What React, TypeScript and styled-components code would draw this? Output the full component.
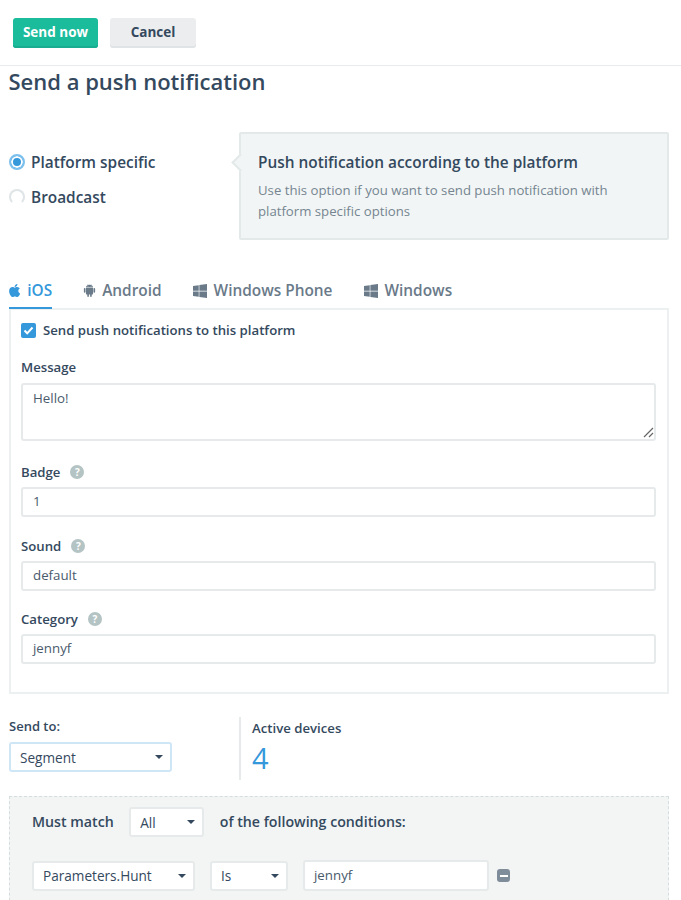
import React from "react";
import styled, { createGlobalStyle } from "styled-components";
import { FaApple, FaWindows } from "react-icons/fa";
import { AiFillAndroid } from "react-icons/ai";

const Global = createGlobalStyle`
  html, body { margin: 0; padding: 0; background: #fff; }
  body { font-family: "Open Sans", "Liberation Sans", sans-serif; color: #34495e; overflow: hidden; }
  * { box-sizing: border-box; }
`;

const Page = styled.div`
  width: 681px;
  height: 900px;
  overflow: hidden;
`;

const Toolbar = styled.div`
  height: 66px;
  border-bottom: 1px solid #e9eced;
  padding: 18px 0 0 13px;
  display: flex;
  gap: 12px;
  align-items: flex-start;
`;

const Button = styled.button<{ $primary?: boolean }>`
  width: ${(p) => (p.$primary ? 85 : 86)}px;
  height: 30px;
  padding: 0 0 3px;
  border: 0;
  border-radius: 3px;
  font: 700 13.5px "Open Sans", sans-serif;
  background: ${(p) => (p.$primary ? "#1abc9c" : "#ebedef")};
  color: ${(p) => (p.$primary ? "#fff" : "#34495e")};
  box-shadow: inset 0 -2px 0 ${(p) => (p.$primary ? "#18ad90" : "#e1e4e6")};
`;

const Content = styled.div`
  padding: 0 12px 0 9px;
`;

const Title = styled.h1`
  margin: 0 0 0 -0.5px;
  height: 30px;
  font-size: 22px;
  line-height: 30px;
  font-weight: 600;
  color: #34495e;
`;

const ChoiceRow = styled.div`
  display: flex;
  margin-top: 36px;
  margin-bottom: 34px;
`;

const Radios = styled.div`
  width: 230px;
  padding-top: 19px;
  display: flex;
  flex-direction: column;
  gap: 13px;
`;

const RadioRow = styled.div`
  display: flex;
  align-items: center;
  gap: 6px;
  height: 22px;
  font-size: 15.4px;
  font-weight: 600;
`;

const RadioDot = styled.span<{ $on?: boolean }>`
  width: 16px;
  height: 16px;
  border-radius: 50%;
  flex: none;
  background: ${(p) => (p.$on ? "#3498db" : "#fff")};
  border: ${(p) => (p.$on ? "2px solid #7cc0ee" : "2px solid #dfe4e6")};
  box-shadow: ${(p) => (p.$on ? "inset 0 0 0 2px #fff" : "none")};
  ${(p) => (p.$on ? "" : "border-bottom-color: transparent;")}
`;

const Callout = styled.div`
  position: relative;
  width: 430px;
  height: 108px;
  background: #f2f5f5;
  border: 2px solid #e3e9e9;
  border-radius: 2px;
  padding: 18px 17px 0;
  &::before {
    content: "";
    position: absolute;
    left: -7px;
    top: 22px;
    width: 11px;
    height: 11px;
    background: #f2f5f5;
    border-left: 2px solid #e3e9e9;
    border-bottom: 2px solid #e3e9e9;
    transform: rotate(45deg);
  }
`;

const CalloutTitle = styled.div`
  font-size: 15.4px;
  line-height: 22px;
  font-weight: 600;
`;

const CalloutText = styled.div`
  margin-top: 6px;
  font-size: 13.2px;
  line-height: 21px;
  color: #758591;
`;

const Tabs = styled.div`
  display: flex;
  gap: 31px;
  height: 35px;
`;

const Tab = styled.div<{ $active?: boolean }>`
  height: 35px;
  display: flex;
  align-items: center;
  gap: 7px;
  font-size: 15.4px;
  font-weight: 600;
  color: ${(p) => (p.$active ? "#3498db" : "#6a7a89")};
  border-bottom: 2px solid ${(p) => (p.$active ? "#3498db" : "transparent")};
  & svg { flex: none; }
`;

const AppleIcon = styled(FaApple)`
  width: 11.25px;
  height: 15px;
`;

const WindowsIcon = styled(FaWindows)`
  width: 14px;
  height: 16px;
`;

const AndroidIcon = styled(AiFillAndroid)`
  width: 15px;
  height: 15px;
  margin: 0 -1.5px;
`;

const Panel = styled.div`
  border: 2px solid #ecf0f0;
  height: 386px;
  margin-top: -1px;
  padding: 10px 11px 0 10px;
`;

const CheckRow = styled.div`
  display: flex;
  align-items: center;
  gap: 7px;
  height: 20px;
  font-size: 13.2px;
  font-weight: 600;
`;

const CheckBox = styled.span`
  width: 15px;
  height: 15px;
  border-radius: 2px;
  background: #3498db;
  display: flex;
  align-items: center;
  justify-content: center;
  & svg { display: block; }
`;

const FieldLabel = styled.div`
  display: flex;
  align-items: center;
  gap: 10px;
  height: 20px;
  font-size: 13.2px;
  font-weight: 600;
`;

const Help = styled.span`
  width: 14px;
  height: 14px;
  border-radius: 50%;
  background: #b4c3c3;
  color: #fff;
  font-size: 10px;
  font-weight: 700;
  line-height: 14px;
  text-align: center;
`;

const Field = styled.div<{ $top: number }>`
  margin-top: ${(p) => p.$top}px;
`;

const Input = styled.div<{ $tall?: boolean }>`
  position: relative;
  margin-top: ${(p) => (p.$tall ? 6 : 5)}px;
  height: ${(p) => (p.$tall ? 58 : 30)}px;
  border: 2px solid #e6eaea;
  border-radius: 3px;
  background: #fff;
  padding: ${(p) => (p.$tall ? "3px" : "0")} 10px 0;
  font-size: 13.3px;
  line-height: ${(p) => (p.$tall ? "20px" : "24px")};
  color: #4a5b6c;
`;

const Grip = styled.svg`
  position: absolute;
  right: 0;
  bottom: 1px;
`;

const SendRow = styled.div`
  display: flex;
  margin-top: 23px;
`;

const SendCol = styled.div`
  width: 230px;
`;

const SendLabel = styled.div`
  font-size: 13px;
  font-weight: 600;
  line-height: 18px;
  margin-bottom: 7px;
`;

const Select = styled.div<{ $w: number; $focus?: boolean }>`
  width: ${(p) => p.$w}px;
  height: 30px;
  border: 2px solid ${(p) => (p.$focus ? "#cfe6f6" : "#e6eaea")};
  border-radius: 3px;
  background: #fff;
  display: flex;
  align-items: center;
  justify-content: space-between;
  padding: 0 7px 0 9px;
  font-size: 13.6px;
  font-weight: 500;
  color: #34495e;
  flex: none;
  &::after {
    content: "";
    border-top: 4px solid #34495e;
    border-left: 4px solid transparent;
    border-right: 4px solid transparent;
  }
`;

const Active = styled.div`
  border-left: 2px solid #e6eaea;
  height: 63px;
  padding: 2px 0 0 11px;
`;

const ActiveLabel = styled.div`
  font-size: 13.2px;
  font-weight: 600;
  line-height: 18px;
`;

const ActiveCount = styled.div`
  font-size: 29px;
  line-height: 36px;
  margin-top: 3px;
  color: #3498db;
`;

const Conditions = styled.div`
  margin-top: 16px;
  height: 120px;
  border: 1px dashed #d5dede;
  background: #f3f5f5;
  padding: 10px 0 0 22px;
`;

const MatchRow = styled.div`
  display: flex;
  align-items: center;
  gap: 15.5px;
  font-size: 14.2px;
  font-weight: 600;
`;

const MatchText = styled.span`
  margin-bottom: 2px;
`;

const RuleRow = styled.div`
  display: flex;
  align-items: center;
  gap: 15px;
  margin-top: 23px;
`;

const RuleInput = styled.div`
  width: 186px;
  height: 31px;
  border: 2px solid #e6eaea;
  border-radius: 3px;
  background: #fff;
  padding: 0 9px;
  font-size: 13.3px;
  line-height: 27px;
  color: #4a5b6c;
`;

const Minus = styled.span`
  width: 13px;
  height: 13px;
  border-radius: 3px;
  background: #7f8c99;
  display: flex;
  align-items: center;
  justify-content: center;
  margin-left: -7px;
  &::before {
    content: "";
    width: 8px;
    height: 2px;
    background: #fff;
  }
`;

export default function App() {
  return (
    <Page>
      <Global />
      <Toolbar>
        <Button $primary>Send now</Button>
        <Button>Cancel</Button>
      </Toolbar>
      <Content>
        <Title>Send a push notification</Title>
        <ChoiceRow>
          <Radios>
            <RadioRow><RadioDot $on />Platform specific</RadioRow>
            <RadioRow><RadioDot />Broadcast</RadioRow>
          </Radios>
          <Callout>
            <CalloutTitle>Push notification according to the platform</CalloutTitle>
            <CalloutText>
              Use this option if you want to send push notification with
              <br />
              platform specific options
            </CalloutText>
          </Callout>
        </ChoiceRow>
        <Tabs>
          <Tab $active><AppleIcon />iOS</Tab>
          <Tab><AndroidIcon />Android</Tab>
          <Tab><WindowsIcon />Windows Phone</Tab>
          <Tab><WindowsIcon />Windows</Tab>
        </Tabs>
        <Panel>
          <CheckRow>
            <CheckBox>
              <svg width="11" height="11" viewBox="0 0 11 11" fill="none">
                <path d="M1.5 5.5 4.2 8.3 9.5 2.5" stroke="#fff" strokeWidth="2" />
              </svg>
            </CheckBox>
            Send push notifications to this platform
          </CheckRow>
          <Field $top={17}>
            <FieldLabel>Message</FieldLabel>
            <Input $tall>
              Hello!
              <Grip width="12" height="12" viewBox="0 0 12 12" fill="none">
                <path d="M2 11 11 2M7 11l4-4" stroke="#666" strokeWidth="1.2" />
              </Grip>
            </Input>
          </Field>
          <Field $top={21}>
            <FieldLabel>Badge<Help>?</Help></FieldLabel>
            <Input>1</Input>
          </Field>
          <Field $top={18.5}>
            <FieldLabel>Sound<Help>?</Help></FieldLabel>
            <Input>default</Input>
          </Field>
          <Field $top={18.5}>
            <FieldLabel>Category<Help>?</Help></FieldLabel>
            <Input>jennyf</Input>
          </Field>
        </Panel>
        <SendRow>
          <SendCol>
            <SendLabel>Send to:</SendLabel>
            <Select $w={163} $focus>Segment</Select>
          </SendCol>
          <Active>
            <ActiveLabel>Active devices</ActiveLabel>
            <ActiveCount>4</ActiveCount>
          </Active>
        </SendRow>
        <Conditions>
          <MatchRow>
            <MatchText>Must match</MatchText>
            <Select $w={75}>All</Select>
            <MatchText>of the following conditions:</MatchText>
          </MatchRow>
          <RuleRow>
            <Select $w={163}>Parameters.Hunt</Select>
            <Select $w={78}>Is</Select>
            <RuleInput>jennyf</RuleInput>
            <Minus />
          </RuleRow>
        </Conditions>
      </Content>
    </Page>
  );
}
